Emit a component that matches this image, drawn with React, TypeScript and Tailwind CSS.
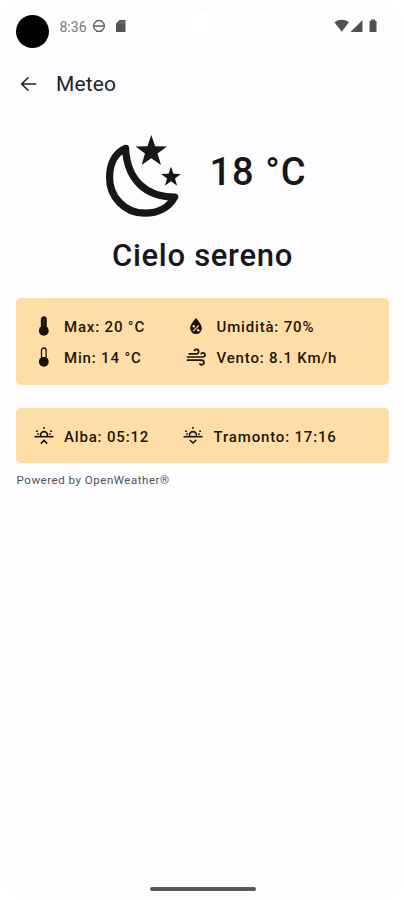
import type { ReactNode } from "react";

const STAR =
  "0,-16.5 3.9,-5.3 15.7,-5.1 6.3,2 9.7,13.4 0,6.6 -9.7,13.4 -6.3,2 -15.7,-5.1 -3.9,-5.3";

function ClearNight() {
  return (
    <svg width="90" height="90" viewBox="100 130 90 90" className="shrink-0">
      <path
        d="M125.6 148.4C115 153 109.6 164 109.6 177A35.2 35.2 0 0 0 145 213.2C158 213.2 169 207.5 174.6 197C146 197 127 180 125.6 148.4Z"
        fill="none"
        stroke="#17171a"
        strokeWidth="7.2"
        strokeLinejoin="round"
      />
      <polygon points={STAR} fill="#17171a" transform="translate(151.3 151.6)" />
      <polygon points={STAR} fill="#17171a" transform="translate(171 177.2) scale(.63)" />
    </svg>
  );
}

function Thermometer({ full }: { full: boolean }) {
  return (
    <svg width="20" height="20" viewBox="0 0 20 20" className="shrink-0">
      <rect x="7.5" y="1" width="4.6" height="13" rx="2.3" fill={full ? "#1a1208" : "#ffdda6"} stroke="#1a1208" strokeWidth="1.3" />
      <circle cx="9.8" cy="14.8" r="4.9" fill="#1a1208" />
      <path d="M9.8 3V10" stroke={full ? "#5c4a30" : "#ffdda6"} strokeWidth={full ? 0.6 : 1} />
    </svg>
  );
}

function Humidity() {
  return (
    <svg width="20" height="20" viewBox="0 0 20 20" className="shrink-0">
      <path d="M10 1.8C8 4.8 4.2 8.3 4.2 12.3a5.8 5.8 0 0 0 11.6 0C15.8 8.3 12 4.8 10 1.8Z" fill="#1a1208" />
      <path d="M7.2 15.1L12.8 9.5" stroke="#ffdda6" strokeWidth="1.1" />
      <circle cx="7.8" cy="10.3" r="1.2" fill="#ffdda6" />
      <circle cx="12.2" cy="14.2" r="1.2" fill="#ffdda6" />
    </svg>
  );
}

function Wind() {
  return (
    <svg width="20" height="20" viewBox="0 0 20 20" fill="none" stroke="#1a1208" strokeWidth="1.7" className="shrink-0">
      <path d="M2.5 6.8H10.5a2.2 2.2 0 1 0-2.2-2.7" />
      <path d="M.8 10H17a2.1 2.1 0 1 0-2.1-2.6" />
      <path d="M.8 13.2H15.6a2.3 2.3 0 1 1-2.1 3.2" />
    </svg>
  );
}

function Sun({ down }: { down: boolean }) {
  return (
    <svg width="20" height="20" viewBox="0 0 20 20" fill="none" stroke="#1a1208" strokeWidth="1.6" className="shrink-0">
      <path d="M.5 10.7H19.5" />
      <path d="M6.6 10.5V9a3.4 3.4 0 0 1 6.8 0V10.5" />
      <path d="M10 .9V2.8M2 5.2H3.8M16.2 5.2H18M3.2 8H4.9M15.1 8H16.8" />
      <path d={down ? "M6.8 14L10 17L13.2 14" : "M6.8 17.6L10 14.4L13.2 17.6"} />
    </svg>
  );
}

function Item({ icon, children }: { icon: ReactNode; children: ReactNode }) {
  return (
    <div className="flex h-5 items-center gap-[10.5px]">
      {icon}
      <span className="whitespace-nowrap pt-px text-[15px] font-medium leading-5 tracking-[0.83px] text-[#1f160a]">{children}</span>
    </div>
  );
}

export default function App() {
  return (
    <div className="h-[900px] w-[404px] overflow-hidden bg-white font-[Roboto,sans-serif]">
      <div className="relative flex h-full flex-col rounded-[28px] bg-[#fdfdff]">
        <div className="absolute left-[191px] top-3 size-[23px] rounded-full bg-white" />
        <header className="flex h-[52px] items-start justify-between pl-[15.5px] pr-[26px]">
          <div className="flex items-start">
            <div className="mt-[15px] size-[33px] rounded-full bg-black" />
            <span className="ml-[11px] mt-[17px] w-[27px] whitespace-nowrap text-[14px] leading-5 text-[#77777a]">8:36</span>
            <svg width="14" height="14" viewBox="0 0 14 14" fill="none" stroke="#69696c" className="ml-[5.5px] mt-[19px]">
              <circle cx="7" cy="7" r="5.4" strokeWidth="1.5" />
              <path d="M2 7H12" strokeWidth="1.6" />
              <path d="M4 1.5H10M4 12.5H10" strokeWidth="1.2" />
            </svg>
            <svg width="12" height="14" viewBox="0 0 12 14" className="ml-[9px] mt-[19px]">
              <path d="M4.5 1H10.5V13H1V4.5Z" fill="#555558" />
              <path d="M4.8 2.5V4.5M6.8 2.5V4.5M8.8 2.5V4.5" stroke="#8b8b8e" strokeWidth=".8" />
            </svg>
          </div>
          <div className="flex pt-[19px]">
            <svg width="44" height="14" viewBox="0 0 44 14" fill="#515154">
              <path d="M.5 3.2C4.8-.1 10.7 -.1 15 3.2L7.7 12.7Z" />
              <path d="M28.5 1V13H16.5Z" />
              <path d="M37 .5H41V2H42.5V13H35.5V2H37Z" />
            </svg>
          </div>
        </header>

        <div className="flex h-16 items-center pl-5">
          <svg width="18" height="18" viewBox="0 0 18 18" fill="none" stroke="#222225" strokeWidth="1.6">
            <path d="M16.3 9H2M8.5 2.2L1.7 9L8.5 15.8" />
          </svg>
          <h1 className="ml-[18px] text-[21px] leading-7 tracking-[0.1px] text-[#242427]">Meteo</h1>
        </div>

        <main className="px-4 pt-[14px]">
          <div className="flex items-center pl-[84px]">
            <ClearNight />
            <span className="mb-1.5 ml-[19.5px] whitespace-nowrap text-[38px] font-medium leading-[44px] tracking-[1px] text-[#17171a]">18 °C</span>
          </div>
          <h2 className="mt-4 whitespace-nowrap pl-24 text-[31px] font-medium leading-10 tracking-[0.7px] text-[#17171a]">Cielo sereno</h2>

          <section className="mt-[22px] grid h-[87px] w-[373px] grid-cols-[152.5px_1fr] content-center gap-y-[11px] rounded-[5px] bg-[#ffdda6] pl-[17.5px]">
            <Item icon={<Thermometer full />}>Max: 20 °C</Item>
            <Item icon={<Humidity />}>Umidità: 70%</Item>
            <Item icon={<Thermometer full={false} />}>Min: 14 °C</Item>
            <Item icon={<Wind />}>Vento: 8.1 Km/h</Item>
          </section>

          <section className="mt-[23px] grid h-[55px] w-[373px] grid-cols-[149.5px_1fr] content-center rounded-[5px] bg-[#ffdda6] pl-[17.5px] pt-px">
            <Item icon={<Sun down={false} />}>Alba: 05:12</Item>
            <Item icon={<Sun down />}>Tramonto: 17:16</Item>
          </section>
          <p className="mt-[9px] pl-[0.6px] text-[11.5px] leading-4 tracking-[0.53px] text-[#515154]">Powered by OpenWeather®</p>
        </main>

        <div className="mb-[9.5px] ml-[149.5px] mt-auto h-[4px] w-[106px] rounded-full bg-[#59595b]" />
      </div>
    </div>
  );
}
